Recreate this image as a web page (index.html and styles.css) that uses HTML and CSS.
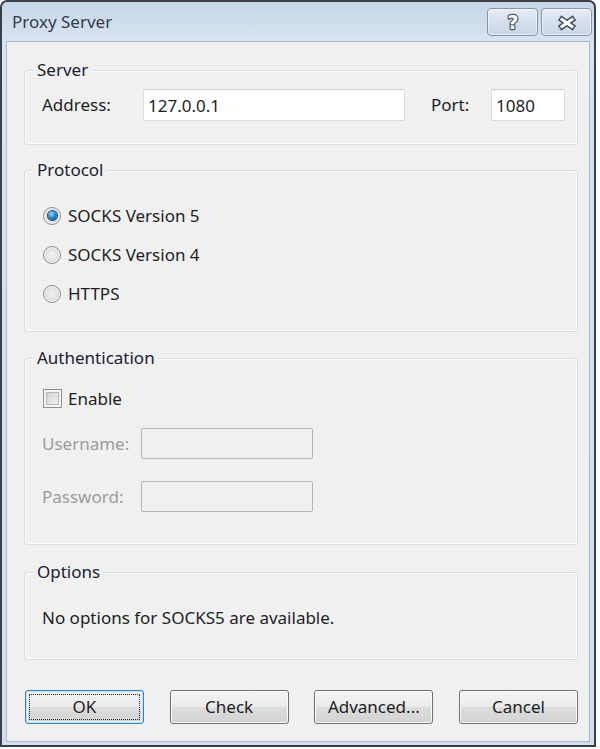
FILE: index.html
```html
<!DOCTYPE html>
<html>
<head>
<meta charset="utf-8">
<title>Proxy Server</title>
<link rel="stylesheet" href="styles.css">
</head>
<body>
<div class="window">
  <div class="titlebar">
    <span class="title">Proxy Server</span>
    <div class="caption-buttons">
      <button class="cap-btn" aria-label="Help">
        <svg width="18" height="22" viewBox="0 0 18 22"><text x="9" y="18" text-anchor="middle" font-family="DejaVu Sans" font-weight="bold" font-size="19" fill="#ffffff" stroke="#4a5362" stroke-width="2.4" stroke-linejoin="round" paint-order="stroke">?</text></svg>
      </button>
      <button class="cap-btn" aria-label="Close">
        <svg class="close-glyph" width="20" height="16" viewBox="0 0 20 16"><path d="M5 4.5 L15 11.5 M5 11.5 L15 4.5" stroke="#4a5362" stroke-width="6" stroke-linecap="square" fill="none"/><path d="M5 4.5 L15 11.5 M5 11.5 L15 4.5" stroke="#ffffff" stroke-width="3" stroke-linecap="square" fill="none"/></svg>
      </button>
    </div>
  </div>
  <div class="client">
    <div class="group group-server">
      <span class="legend">Server</span>
      <div class="server-row">
        <span class="field-label addr-label">Address:</span>
        <input class="textbox addr-box" type="text" value="127.0.0.1">
        <span class="field-label port-label">Port:</span>
        <input class="textbox port-box" type="text" value="1080">
      </div>
    </div>

    <div class="group group-protocol">
      <span class="legend">Protocol</span>
      <div class="radio-list">
        <div class="radio-row"><span class="radio checked"><span class="dot"></span></span><span>SOCKS Version 5</span></div>
        <div class="radio-row"><span class="radio"></span><span>SOCKS Version 4</span></div>
        <div class="radio-row"><span class="radio"></span><span>HTTPS</span></div>
      </div>
    </div>

    <div class="group group-auth">
      <span class="legend">Authentication</span>
      <div class="check-row"><span class="checkbox"></span><span>Enable</span></div>
      <div class="auth-row user-row">
        <span class="field-label disabled auth-label">Username:</span>
        <input class="textbox disabled-box auth-box" type="text" disabled>
      </div>
      <div class="auth-row pass-row">
        <span class="field-label disabled auth-label">Password:</span>
        <input class="textbox disabled-box auth-box" type="password" disabled>
      </div>
    </div>

    <div class="group group-options">
      <span class="legend">Options</span>
      <div class="options-text">No options for SOCKS5 are available.</div>
    </div>

    <div class="button-row">
      <button class="btn btn-default">OK</button>
      <button class="btn">Check</button>
      <button class="btn">Advanced...</button>
      <button class="btn">Cancel</button>
    </div>
  </div>
</div>
</body>
</html>
```

FILE: styles.css
```css
* {
  box-sizing: border-box;
}

html, body {
  margin: 0;
  padding: 0;
  background: #ffffff;
}

body {
  font-family: "Noto Sans", "Liberation Sans", sans-serif;
  font-size: 17px;
  color: #1c1e24;
}

.window {
  width: 596px;
  height: 747px;
  border: 2px solid #3b3e44;
  border-radius: 7px 7px 0 0;
  background: linear-gradient(#c6d5e7 0px, #d7e3f1 38px, #d3dfee 100%);
  display: flex;
  flex-direction: column;
}

.titlebar {
  height: 39px;
  flex: none;
  display: flex;
  align-items: flex-start;
  justify-content: space-between;
  padding: 0 2px 0 10px;
}

.title {
  margin-top: 8px;
  line-height: 24px;
  color: #343c48;
}

.caption-buttons {
  display: flex;
  gap: 3px;
  margin-top: 6px;
}

.cap-btn {
  width: 51px;
  height: 28px;
  padding: 0;
  border: 1px solid #8595ab;
  border-radius: 4px;
  background: linear-gradient(#e6edf6, #d4dfec 50%, #c9d6e6);
  box-shadow: inset 0 0 0 1px rgba(255, 255, 255, 0.55);
  display: flex;
  align-items: center;
  justify-content: center;
}

.cap-btn svg {
  display: block;
}

.close-glyph {
  margin-top: 2px;
}

.client {
  flex: 1;
  margin: 0 4px 3px 4px;
  background: #f0f0f0;
  border: 1px solid #aab8ca;
  padding: 28px 11px 0 17px;
  display: flex;
  flex-direction: column;
}

.group {
  border: 1px solid #d5dfe5;
  border-radius: 3px;
  box-shadow: inset 0 0 0 1px #fbfcfd;
  flex: none;
}

.legend {
  display: block;
  width: max-content;
  margin: -12px 0 0 9px;
  padding: 0 3px;
  line-height: 22px;
  background: #f0f0f0;
  color: #1a2030;
}

.group-server {
  height: 75px;
}

.group-protocol {
  height: 162px;
  margin-top: 25px;
}

.group-auth {
  height: 187px;
  margin-top: 26px;
}

.group-options {
  height: 88px;
  margin-top: 27px;
}

.server-row {
  display: flex;
  align-items: center;
  margin-top: 8px;
  padding-left: 17px;
}

.field-label {
  line-height: 24px;
  flex: none;
}

.addr-label {
  width: 101px;
}

.port-label {
  width: 60px;
  margin-left: 26px;
}

.textbox {
  font-family: "Noto Sans", "Liberation Sans", sans-serif;
  font-size: 17px;
  color: #1c1e24;
  height: 32px;
  padding: 0 4px;
  border: 1px solid #d9dee4;
  border-top-color: #c9cfd6;
  border-radius: 2px;
  background: #ffffff;
  outline: none;
  margin: 0;
}

.addr-box {
  width: 262px;
}

.port-box {
  width: 74px;
}

.radio-list {
  margin-top: 15px;
  padding-left: 18px;
}

.radio-row {
  height: 39px;
  display: flex;
  align-items: center;
}

.radio {
  width: 18px;
  height: 18px;
  border-radius: 50%;
  border: 1px solid #8d8f92;
  background: radial-gradient(circle at 50% 50%, #f4f4f4 0, #e2e2e2 50%, #c6c6c6 100%);
  box-shadow: inset 0 0 0 1px #f7f7f7;
  margin-right: 7px;
  display: flex;
  align-items: center;
  justify-content: center;
  flex: none;
}

.dot {
  width: 9px;
  height: 9px;
  border-radius: 50%;
  background: radial-gradient(circle at 40% 35%, #9fdcff 0, #2a86cc 45%, #0c3e72 100%);
  box-shadow: 0 0 0 1px #1f4f7c;
}

.check-row {
  margin-top: 20px;
  padding-left: 18px;
  height: 19px;
  display: flex;
  align-items: center;
}

.checkbox {
  width: 19px;
  height: 19px;
  border: 1px solid #8e8f8f;
  background: linear-gradient(135deg, #c8c8c8 0%, #e4e4e4 55%, #f8f8f8 100%);
  box-shadow: inset 0 0 0 2px #f4f4f4, inset 0 0 0 3px #b6b6b6;
  margin-right: 6px;
  flex: none;
}

.auth-row {
  display: flex;
  align-items: center;
  padding-left: 17px;
}

.user-row {
  margin-top: 20px;
}

.pass-row {
  margin-top: 22px;
}

.auth-label {
  width: 99px;
}

.disabled {
  color: #9c9c9c;
}

.auth-box {
  width: 172px;
  height: 31px;
}

.disabled-box {
  background: #f0f0f0;
  border: 1px solid #b3b6b9;
}

.options-text {
  margin-top: 23px;
  padding-left: 17px;
  line-height: 24px;
}

.button-row {
  margin-top: 30px;
  padding-left: 1px;
  display: flex;
  justify-content: space-between;
}

.btn {
  position: relative;
  width: 119px;
  height: 34px;
  padding: 0 0 1px 0;
  font-family: "Noto Sans", "Liberation Sans", sans-serif;
  font-size: 17px;
  color: #1c1e24;
  border: 1px solid #707070;
  border-radius: 3px;
  background: linear-gradient(#f3f3f3 0%, #ebebeb 48%, #dddddd 52%, #d2d2d2 100%);
  box-shadow: inset 0 0 0 1px #fbfbfb;
}

.btn-default {
  border-color: #3c7fb1;
  box-shadow: inset 0 0 0 1px #bfe3f7, inset 0 0 0 2px #e6f4fc;
}

.btn-default::after {
  content: "";
  position: absolute;
  top: 3px;
  left: 3px;
  right: 3px;
  bottom: 3px;
  border: 1px dotted #2a2a2a;
  border-radius: 1px;
}
```
